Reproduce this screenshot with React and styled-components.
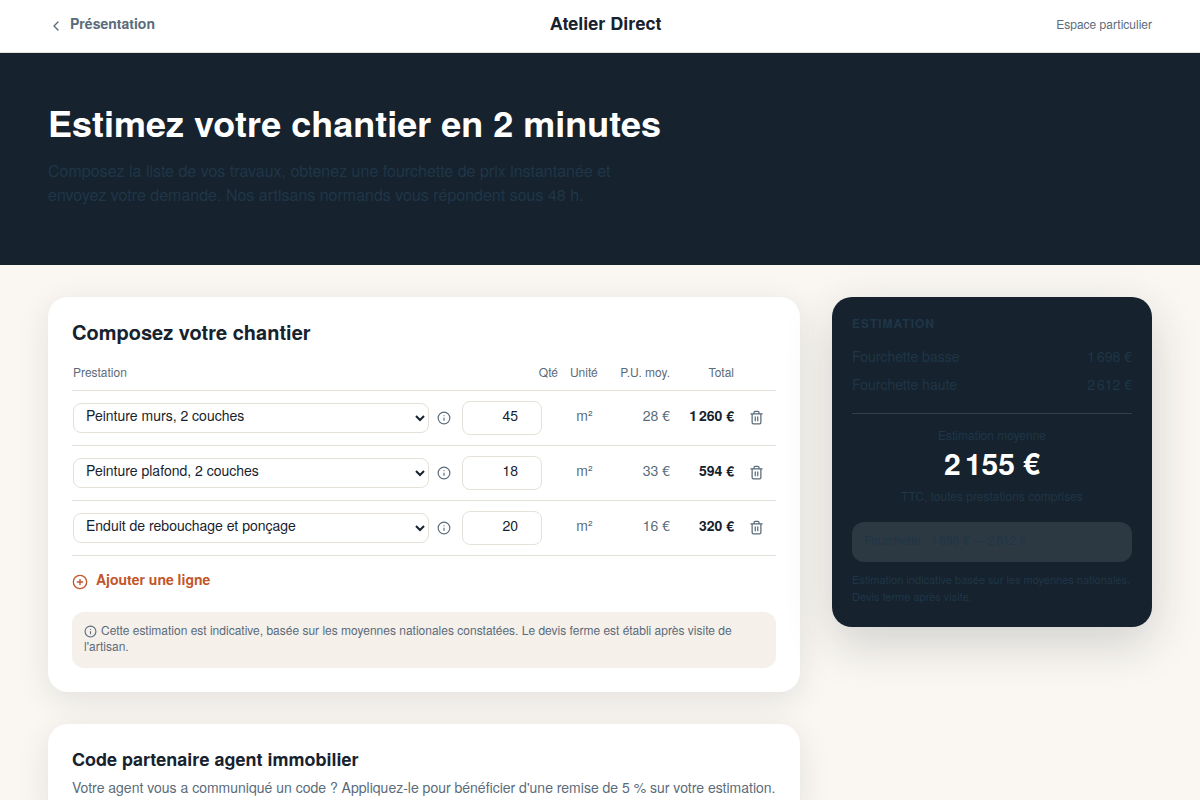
import React, { useState } from 'react';
import styled, { createGlobalStyle } from 'styled-components';

const GlobalStyle = createGlobalStyle`
  *, *::before, *::after {
    box-sizing: border-box;
  }

  body {
    margin: 0;
    background: #faf7f2;
    color: #16222d;
    font-family: "TeX Gyre Heros", "Liberation Sans", Arial, sans-serif;
    font-size: 16px;
    line-height: 24px;
  }

  button, input, select {
    font: inherit;
    color: inherit;
  }
`;

const Header = styled.header`
  display: flex;
  align-items: center;
  justify-content: space-between;
  padding: 9px 48px 15px;
  background: #ffffff;
  border-bottom: 1px solid #e5e0d8;
`;

const BackLink = styled.a`
  display: inline-flex;
  align-items: center;
  gap: 6px;
  color: #5a6b7a;
  font-size: 14px;
  font-weight: 600;
  line-height: 24px;
  text-decoration: none;

  svg {
    margin-top: 6px;
  }
`;

const Brand = styled.span`
  font-size: 18px;
  font-weight: 700;
  line-height: 28px;
`;

const Space = styled.span`
  padding-top: 2px;
  color: #5a6b7a;
  font-size: 12px;
`;

const Hero = styled.section`
  padding: 48px 48px 58px;
  background: #16222d;
`;

const HeroTitle = styled.h1`
  margin: 0 0 16px;
  color: #ffffff;
  font-size: 36px;
  font-weight: 700;
  line-height: 42px;
`;

const HeroText = styled.p`
  max-width: 576px;
  margin: 0;
  color: #1f3648;
`;

const Main = styled.main`
  display: grid;
  grid-template-columns: minmax(0, 1fr) 320px;
  align-items: start;
  gap: 32px;
  padding: 32px 48px;
`;

const Column = styled.div`
  display: grid;
  gap: 32px;
`;

const Card = styled.section`
  padding: 24px;
  background: #ffffff;
  border-radius: 20px;
  box-shadow: 0 8px 32px rgba(22, 34, 45, 0.1);
`;

const CardTitle = styled.h2`
  margin: 0 0 ${({ $small }) => ($small ? '5px' : '12px')};
  font-size: ${({ $small }) => ($small ? '18px' : '20px')};
  font-weight: 700;
  line-height: 22px;
`;

const CardText = styled.p`
  margin: 0;
  color: #5a6b7a;
  font-size: 14px;
`;

const Table = styled.table`
  width: 100%;
  border-collapse: collapse;
  font-size: 14px;
`;

const Th = styled.th`
  width: ${({ $width }) => $width || 'auto'};
  padding: 5px ${({ $pad }) => $pad || '0'} 6px 1px;
  border-bottom: 1px solid #e5e0d8;
  color: #5a6b7a;
  font-size: 12px;
  font-weight: 400;
  text-align: ${({ $align }) => $align || 'left'};
`;

const Td = styled.td`
  padding: 10px ${({ $pad }) => $pad || '0'} 10px 1px;
  border-bottom: 1px solid #e5e0d8;
  color: ${({ $strong }) => ($strong ? '#16222d' : '#5a6b7a')};
  font-weight: ${({ $strong }) => ($strong ? 700 : 400)};
  text-align: ${({ $align }) => $align || 'left'};
  white-space: nowrap;
`;

const TextTd = styled(Td)`
  padding-top: 7px;
  padding-bottom: 13px;
`;

const ActionTd = styled(TextTd)`
  padding-left: 3px;
`;

const ServiceCell = styled.div`
  display: flex;
  align-items: center;
  gap: 8px;
`;

const Select = styled.select`
  flex: 1;
  min-width: 0;
  height: 30px;
  padding: 0 0 6px 8px;
  background: #ffffff;
  border: 1px solid #e5e0d8;
  border-radius: 8px;
  color: #16222d;
`;

const QtyInput = styled.input`
  display: block;
  width: 80px;
  height: 34px;
  padding: 3px 8px 9px;
  background: #ffffff;
  border: 1px solid #e5e0d8;
  border-radius: 8px;
  color: #16222d;
  text-align: right;
`;

const IconButton = styled.button`
  display: inline-flex;
  padding: 0;
  border: 0;
  background: none;
  color: #5a6b7a;
  vertical-align: middle;
  cursor: pointer;
`;

const AddButton = styled.button`
  display: flex;
  align-items: center;
  gap: 8px;
  margin: 11px 0 21px;
  padding: 0;
  border: 0;
  background: none;
  color: #c2562b;
  font-size: 14px;
  font-weight: 600;
  cursor: pointer;

  svg {
    margin-top: 6px;
  }
`;

const Note = styled.p`
  margin: 0;
  padding: 10px 12px 14px;
  background: #f5f0ea;
  border-radius: 12px;
  color: #5a6b7a;
  font-size: 12px;
  line-height: 16px;

  svg {
    margin-right: 4px;
    vertical-align: middle;
  }
`;

const Estimate = styled.aside`
  padding: 16px 20px 20px;
  background: #16222d;
  border-radius: 20px;
  box-shadow: 0 16px 48px rgba(22, 34, 45, 0.18);
  color: #1f3648;
`;

const EstimateTitle = styled.h2`
  margin: 0 0 9px;
  font-size: 12px;
  font-weight: 700;
  letter-spacing: 1px;
  line-height: 20px;
  text-transform: uppercase;
`;

const Range = styled.div`
  display: flex;
  justify-content: space-between;
  font-size: 14px;
  line-height: 28px;
`;

const Average = styled.div`
  display: flex;
  flex-direction: column;
  margin-top: 15px;
  padding: 13px 0 18px;
  border-top: 1px solid #33414c;
  font-size: 12px;
  line-height: 16px;
  text-align: center;
`;

const AverageValue = styled.strong`
  margin-bottom: 5px;
  color: #ffffff;
  font-size: 30px;
  line-height: 40px;
`;

const RangeBox = styled.div`
  padding: 8px 12px 12px;
  background: #2d3942;
  border-radius: 12px;
  font-size: 12px;
  line-height: 20px;
`;

const Legal = styled.p`
  margin: 9px 0 2px;
  font-size: 11px;
  line-height: 17px;
`;

const InfoIcon = ({ size = 14 }) => (
  <svg width={size} height={size} viewBox="0 0 24 24" fill="none" stroke="currentColor" strokeWidth="2" strokeLinecap="round" strokeLinejoin="round">
    <circle cx="12" cy="12" r="10" />
    <path d="M12 16v-4M12 8h.01" />
  </svg>
);

const TrashIcon = () => (
  <svg width="15" height="15" viewBox="0 0 24 24" fill="none" stroke="currentColor" strokeWidth="2" strokeLinecap="round" strokeLinejoin="round">
    <path d="M3 6h18M19 6v14a2 2 0 0 1-2 2H7a2 2 0 0 1-2-2V6M8 6V4a2 2 0 0 1 2-2h4a2 2 0 0 1 2 2v2M10 11v6M14 11v6" />
  </svg>
);

const PlusCircleIcon = () => (
  <svg width="16" height="16" viewBox="0 0 24 24" fill="none" stroke="currentColor" strokeWidth="2" strokeLinecap="round" strokeLinejoin="round">
    <circle cx="12" cy="12" r="10" />
    <path d="M8 12h8M12 8v8" />
  </svg>
);

const ChevronIcon = () => (
  <svg width="16" height="16" viewBox="0 0 24 24" fill="none" stroke="currentColor" strokeWidth="2" strokeLinecap="round" strokeLinejoin="round">
    <path d="m15 18-6-6 6-6" />
  </svg>
);

const services = [
  { id: 'murs', label: 'Peinture murs, 2 couches', price: 28 },
  { id: 'plafond', label: 'Peinture plafond, 2 couches', price: 33 },
  { id: 'enduit', label: 'Enduit de rebouchage et ponçage', price: 16 },
];

const euros = (value) =>
  `${Math.round(value).toString().replace(/\B(?=(\d{3})+$)/g, '\u202f')}\u00a0€`;

function App() {
  const [lines, setLines] = useState([
    { key: 1, service: 'murs', qty: 45 },
    { key: 2, service: 'plafond', qty: 18 },
    { key: 3, service: 'enduit', qty: 20 },
  ]);

  const update = (key, change) =>
    setLines(lines.map((line) => (line.key === key ? { ...line, ...change } : line)));
  const remove = (key) => setLines(lines.filter((line) => line.key !== key));
  const add = () => setLines([...lines, { key: Date.now(), service: 'murs', qty: 1 }]);

  return (
    <>
      <GlobalStyle />
      <Header>
        <BackLink href="#presentation">
          <ChevronIcon />
          Présentation
        </BackLink>
        <Brand>Atelier Direct</Brand>
        <Space>Espace particulier</Space>
      </Header>

      <Hero>
        <HeroTitle>Estimez votre chantier en 2 minutes</HeroTitle>
        <HeroText>
          Composez la liste de vos travaux, obtenez une fourchette de prix instantanée et
          envoyez votre demande. Nos artisans normands vous répondent sous 48 h.
        </HeroText>
      </Hero>

      <Main>
        <Column>
          <Card>
            <CardTitle>Composez votre chantier</CardTitle>
            <Table>
              <thead>
                <tr>
                  <Th>Prestation</Th>
                  <Th $width="108px" $align="right" $pad="11px">Qté</Th>
                  <Th $width="40px">Unité</Th>
                  <Th $width="61px" $align="right">P.U. moy.</Th>
                  <Th $width="64px" $align="right">Total</Th>
                  <Th $width="42px" aria-label="Actions" />
                </tr>
              </thead>
              <tbody>
                {lines.map((line) => {
                  const service = services.find((item) => item.id === line.service);
                  return (
                    <tr key={line.key}>
                      <Td $pad="10px">
                        <ServiceCell>
                          <Select
                            aria-label="Prestation"
                            value={line.service}
                            onChange={(e) => update(line.key, { service: e.target.value })}
                          >
                            {services.map((item) => (
                              <option key={item.id} value={item.id}>{item.label}</option>
                            ))}
                          </Select>
                          <IconButton type="button" aria-label="Détails">
                            <InfoIcon />
                          </IconButton>
                        </ServiceCell>
                      </Td>
                      <Td>
                        <QtyInput
                          type="number"
                          aria-label="Quantité"
                          value={line.qty}
                          onChange={(e) => update(line.key, { qty: Number(e.target.value) })}
                        />
                      </Td>
                      <TextTd $align="center" $pad="10px">m²</TextTd>
                      <TextTd $align="right">{euros(service.price)}</TextTd>
                      <TextTd $align="right" $strong>{euros(service.price * line.qty)}</TextTd>
                      <ActionTd $align="center">
                        <IconButton type="button" aria-label="Supprimer" onClick={() => remove(line.key)}>
                          <TrashIcon />
                        </IconButton>
                      </ActionTd>
                    </tr>
                  );
                })}
              </tbody>
            </Table>
            <AddButton type="button" onClick={add}>
              <PlusCircleIcon />
              Ajouter une ligne
            </AddButton>
            <Note>
              <InfoIcon size={13} />
              Cette estimation est indicative, basée sur les moyennes nationales constatées. Le
              devis ferme est établi après visite de l'artisan.
            </Note>
          </Card>

          <Card>
            <CardTitle $small>Code partenaire agent immobilier</CardTitle>
            <CardText>
              Votre agent vous a communiqué un code ? Appliquez-le pour bénéficier d'une remise de
              5 % sur votre estimation.
            </CardText>
          </Card>
        </Column>

        <Estimate>
          <EstimateTitle>Estimation</EstimateTitle>
          <Range>
            <span>Fourchette basse</span>
            <span>{euros(1698)}</span>
          </Range>
          <Range>
            <span>Fourchette haute</span>
            <span>{euros(2612)}</span>
          </Range>
          <Average>
            <span>Estimation moyenne</span>
            <AverageValue>{euros(2155)}</AverageValue>
            <span>TTC, toutes prestations comprises</span>
          </Average>
          <RangeBox>Fourchette : {euros(1698)} — {euros(2612)}</RangeBox>
          <Legal>Estimation indicative basée sur les moyennes nationales. Devis ferme après visite.</Legal>
        </Estimate>
      </Main>
    </>
  );
}

export default App;
